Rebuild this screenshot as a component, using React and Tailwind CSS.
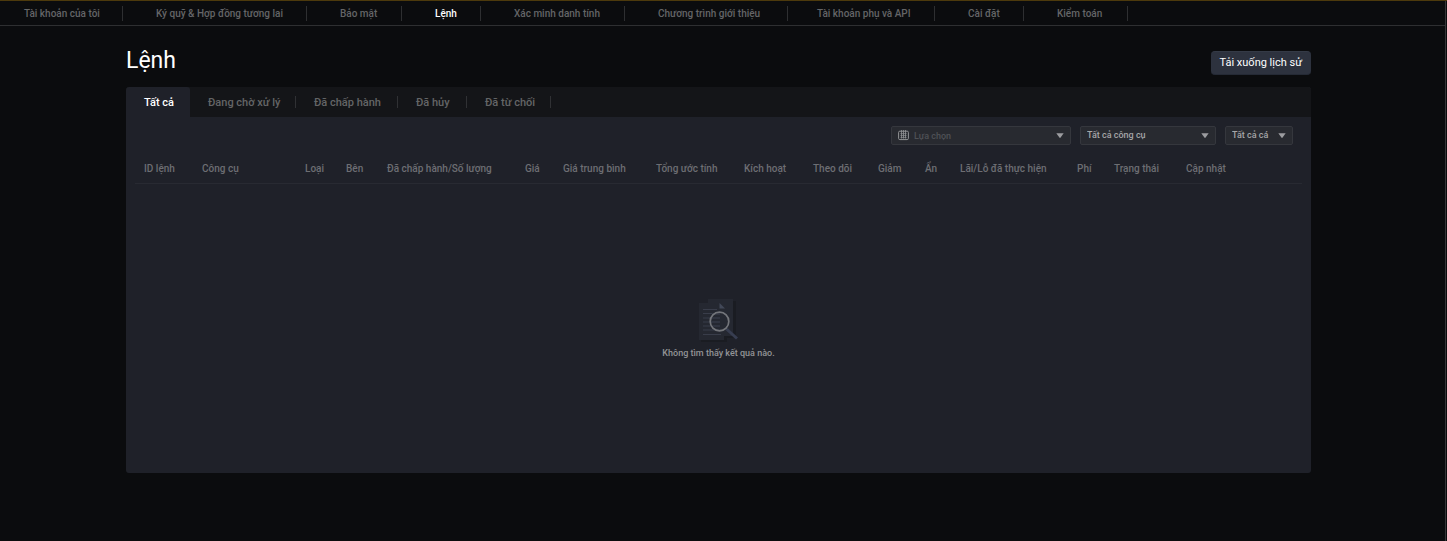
import React, { useState } from 'react';

const navItems = [
    { label: "Tài khoản của tôi", width: "w-[123px] pl-6" },
    { label: "Ký quỹ & Hợp đồng tương lai", width: "w-[184px] pl-[33px]" },
    { label: "Bảo mật", width: "w-[95px] pl-[33px]" },
    { label: "Lệnh", width: "w-[79px] pl-[33px]" },
    { label: "Xác minh danh tính", width: "w-[144px] pl-[33px]" },
    { label: "Chương trình giới thiệu", width: "w-[163px] pl-[33px]" },
    { label: "Tài khoản phụ và API", width: "w-[147px] pl-[29px]" },
    { label: "Cài đặt", width: "w-[89px] pl-[33px]" },
    { label: "Kiểm toán", width: "w-[104px] pl-[33px]" },
];

const tabs = [
    { label: "Tất cả", width: "w-16" },
    { label: "Đang chờ xử lý", width: "w-[106px]" },
    { label: "Đã chấp hành", width: "w-[102px]" },
    { label: "Đã hủy", width: "w-[69px]" },
    { label: "Đã từ chối", width: "w-[84px]" },
];

const columns = [
    { label: "ID lệnh", width: "w-[58px]" },
    { label: "Công cụ", width: "w-[103px]" },
    { label: "Loại", width: "w-[41px]" },
    { label: "Bên", width: "w-[41px]" },
    { label: "Đã chấp hành/Số lượng", width: "w-[138px]" },
    { label: "Giá", width: "w-[38px]" },
    { label: "Giá trung bình", width: "w-[93px]" },
    { label: "Tổng ước tính", width: "w-[88px]" },
    { label: "Kích hoạt", width: "w-[69px]" },
    { label: "Theo dõi", width: "w-[65px]" },
    { label: "Giảm", width: "w-[47px]" },
    { label: "Ẩn", width: "w-[35px]" },
    { label: "Lãi/Lỗ đã thực hiện", width: "w-[117px]" },
    { label: "Phí", width: "w-[37px]" },
    { label: "Trạng thái", width: "w-[72px]" },
    { label: "Cập nhật", width: "" },
];

const Caret = () => (
    <svg className="pointer-events-none absolute right-[7px] top-[7px]" width="8" height="6" viewBox="0 0 8 6" aria-hidden="true">
        <path d="M0.3 0.3h7.4L4 5.3z" fill="#9c9da0" />
    </svg>
);

const CalendarIcon = () => (
    <svg className="pointer-events-none absolute left-[7px] top-1" width="11" height="11" viewBox="0 0 11 11" fill="none" stroke="#929396" aria-hidden="true">
        <rect x="0.6" y="1.2" width="9.8" height="8.4" rx="1.2" strokeWidth="1" />
        <path d="M2.4 3.6h6.2M2.4 5.6h6.2M2.4 7.6h6.2" strokeWidth="0.7" />
        <path d="M3.5 0v8.5M5.5 0v8.5M7.5 0v8.5" strokeWidth="0.8" />
    </svg>
);

const EmptyIcon = () => (
    <svg width="40" height="44" viewBox="0 0 40 44" fill="none" aria-hidden="true">
        <path d="M10 3h27v37H28v4H2V7h8z" fill="#1a1c22" />
        <path d="M9 1h25v37H9z" fill="#252831" />
        <path d="M0 5h15l10 10v27H0z" fill="#252831" />
        <path d="M20.5 5l5.5 5.5h-5.5z" fill="#424858" />
        <path d="M4 11.5h14M4 15.5h9M4 20h7M4 24h7M4 28h8M4 32h18M4 36.5h18" stroke="#393d4a" strokeWidth="1.2" />
        <path d="M13 16h8M12 20h9M12 24h9M12 28h9" stroke="#343846" strokeWidth="1.5" />
        <path d="M27.5 31l10.5 9.5" stroke="#373d50" strokeWidth="3" />
        <circle cx="20.5" cy="23.5" r="9.3" stroke="#74767b" strokeWidth="1.7" />
    </svg>
);

export default function App() {
    const [activeTab, setActiveTab] = useState("Tất cả");
    const [date, setDate] = useState("");

    return (
        <div className="min-h-screen border-t border-[#4d3a0c] bg-[#0b0c0e] pr-px font-['Roboto',sans-serif] font-medium">
            <div className="min-h-[540px] border-r border-[#353638]">
                <nav className="flex h-[25px] items-center border-b border-[#2e2f31]">
                    {navItems.map((item) => (
                        <a
                            key={item.label}
                            href="#"
                            className={`h-[15px] shrink-0 whitespace-nowrap border-r border-[#2e2f31] text-[10px] leading-[15px] ${item.width} ${item.label === "Lệnh" ? "text-white" : "text-[#646567]"}`}
                        >
                            {item.label}
                        </a>
                    ))}
                </nav>

                <main className="pr-2">
                    <div className="mx-auto max-w-[1185px]">
                        <header className="flex h-[61px] items-end justify-between pb-3">
                            <h1 className="text-[23px] leading-7 font-normal text-white">Lệnh</h1>
                            <button type="button" className="h-6 rounded-[4px] border-y border-t-[#343a46] border-b-[#252a35] bg-[#2d323e] px-[9px] text-[11px] leading-5 font-normal whitespace-nowrap text-white">
                                Tải xuống lịch sử
                            </button>
                        </header>

                        <section className="overflow-hidden rounded-[3px] bg-[#1f2129]">
                            <div className="flex h-[30px] items-center bg-[#141518]">
                                {tabs.map((tab) => (
                                    <button
                                        key={tab.label}
                                        type="button"
                                        onClick={() => setActiveTab(tab.label)}
                                        className={`shrink-0 whitespace-nowrap pl-[18px] text-left text-[11px] ${tab.width} ${activeTab === tab.label ? "h-[30px] rounded-t-[3px] bg-[#1f2129] pt-[2px] text-white" : "h-3 border-r border-[#303134] leading-[14px] text-[#646567]"}`}
                                    >
                                        {tab.label}
                                    </button>
                                ))}
                            </div>

                            <div className="flex justify-end gap-[9px] px-[18px] pt-[9px] text-[9px]">
                                <label className="relative w-[180px]">
                                    <CalendarIcon />
                                    <input
                                        type="text"
                                        aria-label="Lựa chọn"
                                        placeholder="Lựa chọn"
                                        value={date}
                                        onChange={(e) => setDate(e.target.value)}
                                        className="block h-[19px] w-full rounded-[2px] border border-[#35373d] bg-[#282a30] pl-[22px] text-[#a5a6a8] placeholder:text-[#4f5156]"
                                    />
                                    <Caret />
                                </label>
                                <label className="relative w-[136px]">
                                    <select aria-label="Công cụ" className="block h-[19px] w-full appearance-none rounded-[2px] border border-[#35373d] bg-[#282a30] pl-[6px] text-[#a5a6a8]">
                                        <option>Tất cả công cụ</option>
                                    </select>
                                    <Caret />
                                </label>
                                <label className="relative w-[68px]">
                                    <select aria-label="Bên" className="block h-[19px] w-full appearance-none rounded-[2px] border border-[#35373d] bg-[#282a30] pl-[6px] text-[#a5a6a8]">
                                        <option>Tất cả cá</option>
                                    </select>
                                    <Caret />
                                </label>
                            </div>

                            <div className="px-[9px] pt-2">
                                <table className="w-full table-fixed text-left">
                                    <thead>
                                        <tr className="h-[30px] border-b border-[#282a32]">
                                            {columns.map((col) => (
                                                <th key={col.label} className={`whitespace-nowrap pt-[2px] pl-[9px] text-[10px] leading-4 font-medium text-[#6d6e73] ${col.width}`}>
                                                    {col.label}
                                                </th>
                                            ))}
                                        </tr>
                                    </thead>
                                </table>
                            </div>

                            <div className="flex flex-col items-center pt-[114px] pb-[113px]">
                                <EmptyIcon />
                                <p className="mt-1 text-[9px] leading-[14px] text-[#929396]">Không tìm thấy kết quả nào.</p>
                            </div>
                        </section>
                    </div>
                </main>
            </div>
        </div>
    );
}
